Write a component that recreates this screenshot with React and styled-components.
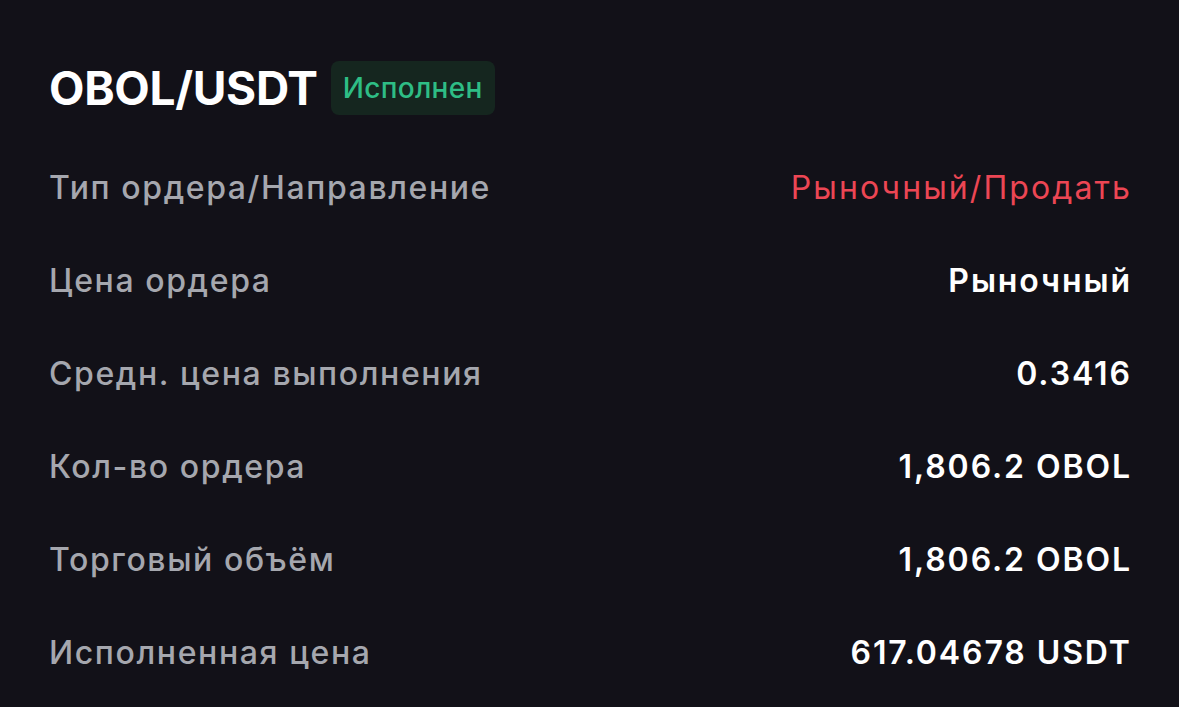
import React from "react";
import styled, { createGlobalStyle } from "styled-components";

const Global = createGlobalStyle`
  html, body {
    margin: 0;
    padding: 0;
    background: #121118;
  }
  body {
    font-family: Inter, Roboto, "Noto Sans", sans-serif;
  }
`;

const rows = [
  { label: "Тип ордера/Направление", value: "Рыночный/Продать", tone: "sell" },
  { label: "Цена ордера", value: "Рыночный" },
  { label: "Средн. цена выполнения", value: "0.3416" },
  { label: "Кол-во ордера", value: "1,806.2 OBOL" },
  { label: "Торговый объём", value: "1,806.2 OBOL" },
  { label: "Исполненная цена", value: "617.04678 USDT" },
];

function App() {
  return (
    <>
      <Global />
      <Card>
        <Header>
          <Pair>OBOL/USDT</Pair>
          <Status>Исполнен</Status>
        </Header>
        <List>
          {rows.map((r) => (
            <Row key={r.label}>
              <Label>{r.label}</Label>
              <Value tone={r.tone}>{r.value}</Value>
            </Row>
          ))}
        </List>
      </Card>
    </>
  );
}

const Card = styled.div`
  width: 1179px;
  height: 707px;
  box-sizing: border-box;
  padding: 61px 49px 0 49px;
  background: #121118;
  display: flex;
  flex-direction: column;
`;

const Header = styled.div`
  display: flex;
  align-items: center;
  gap: 13px;
  height: 54px;
`;

const Pair = styled.span`
  font-size: 46px;
  font-weight: 700;
  color: #ffffff;
  letter-spacing: -0.3px;
`;

const Status = styled.span`
  display: flex;
  align-items: center;
  height: 54px;
  padding: 0 12px;
  border-radius: 8px;
  background: #15261f;
  color: #2ebd85;
  font-size: 28px;
  font-weight: 500;
  letter-spacing: 0.3px;
`;

const List = styled.div`
  display: flex;
  flex-direction: column;
  margin-top: 26px;
`;

const Row = styled.div`
  display: flex;
  justify-content: space-between;
  align-items: center;
  height: 93px;
`;

const Label = styled.span`
  font-size: 32px;
  font-weight: 500;
  letter-spacing: 1.6px;
  color: #a5a7ae;
`;

const Value = styled.span`
  font-size: 32px;
  font-weight: ${(p) => (p.tone === "sell" ? 400 : 600)};
  letter-spacing: ${(p) => (p.tone === "sell" ? "2.1px" : "1.9px")};
  margin-right: ${(p) => (p.tone === "sell" ? "-2.1px" : "-1.9px")};
  color: ${(p) => (p.tone === "sell" ? "#ec4654" : "#ffffff")};
`;

export default App;
